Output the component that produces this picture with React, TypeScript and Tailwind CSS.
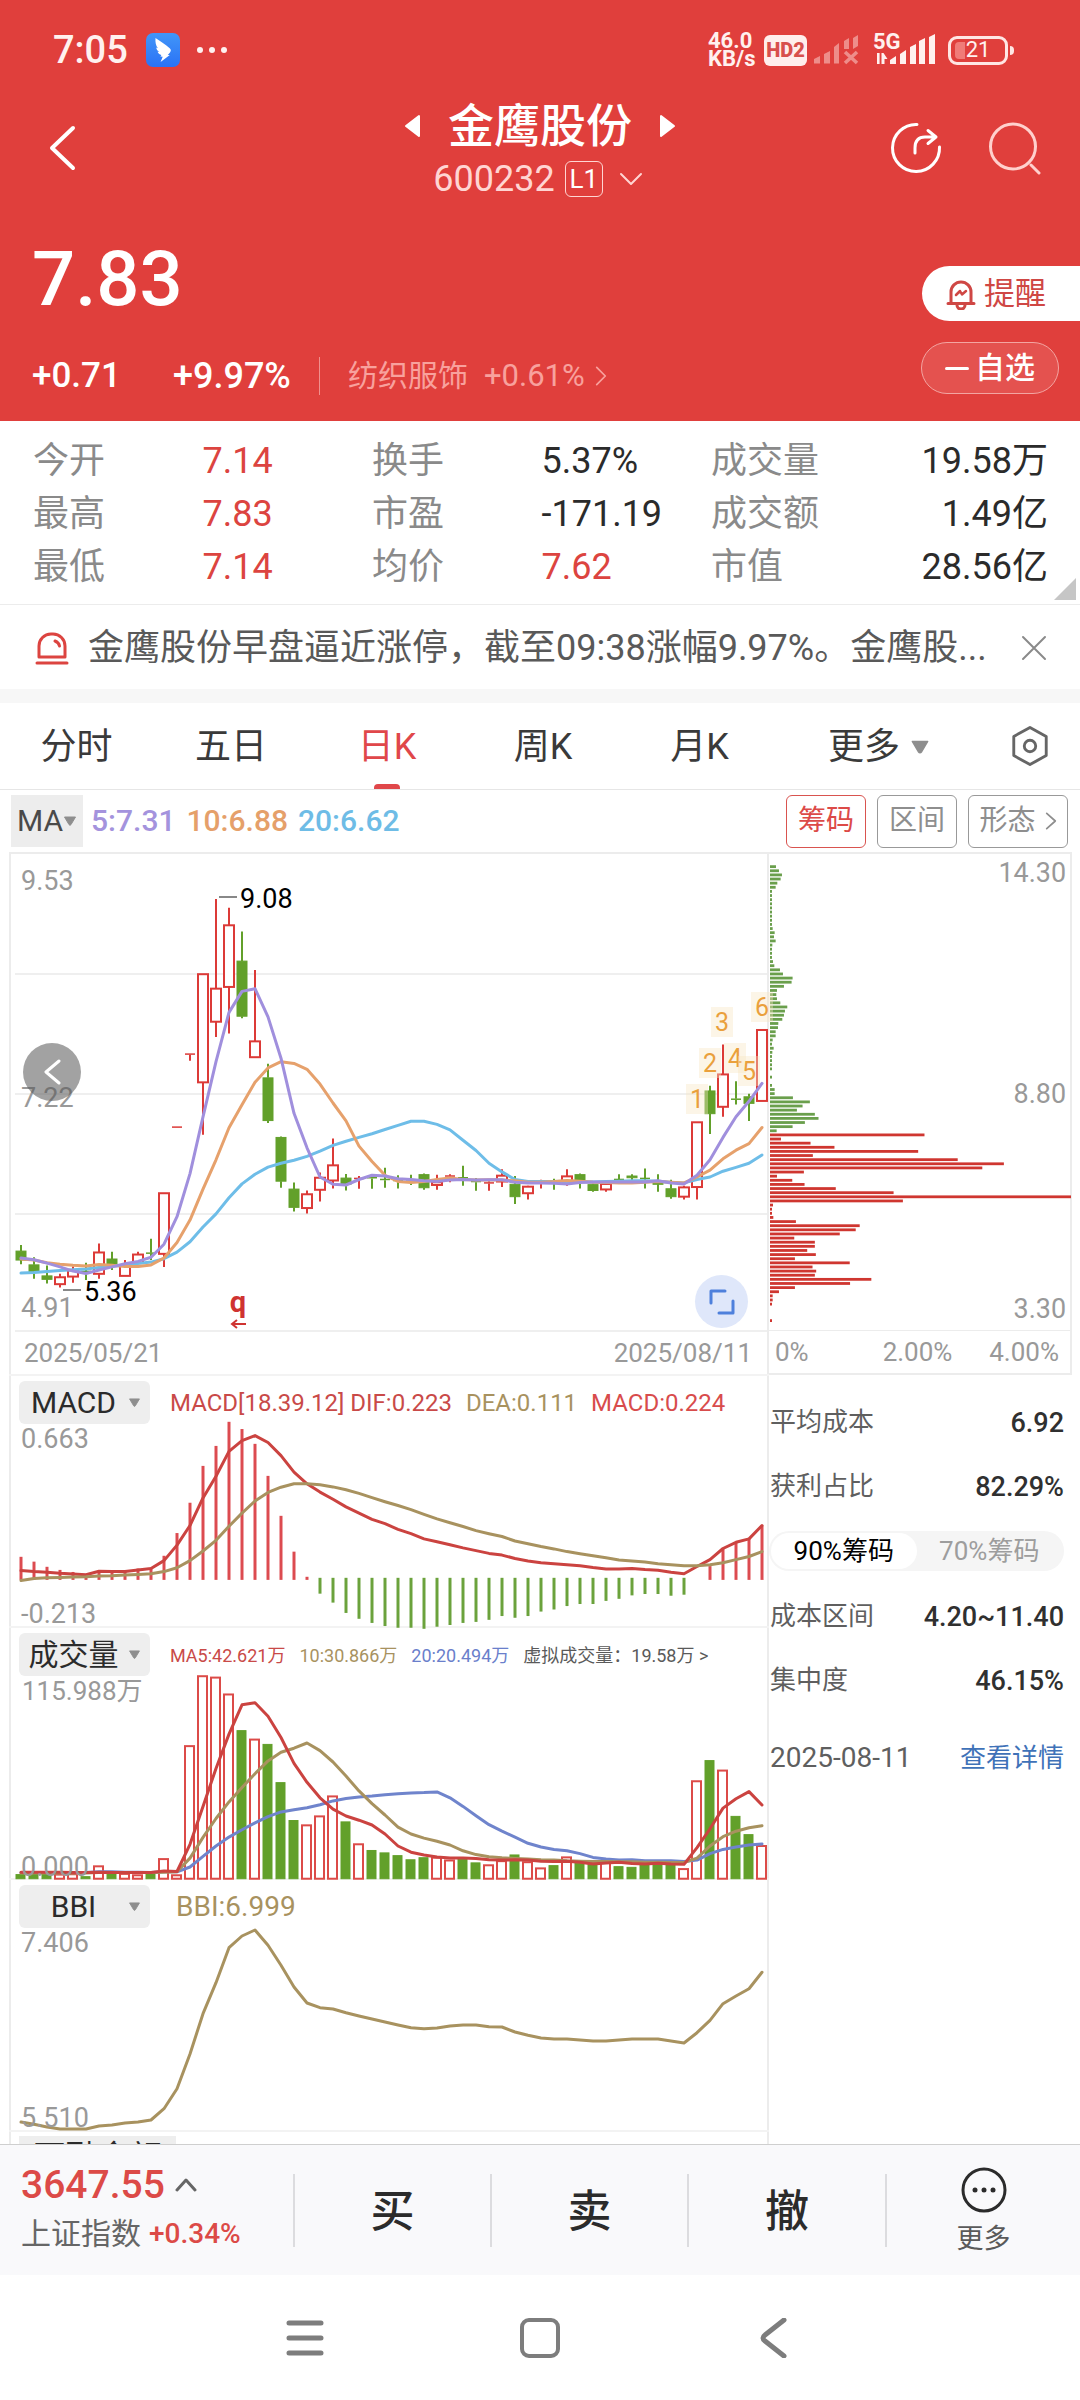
import type { ReactNode } from "react";

type Candle = [up: 0 | 1, high: number, top: number, bottom: number, low: number];

const UP = "#dc3a37";
const DOWN = "#62a02a";
const UNIT = 0.3444;

const xAt = (i: number) => 12 + 13 * i;
const scaleFrom = (origin: number, unit = UNIT) => (v: number) => (v - origin) * unit;
const linePoints = (values: number[], y: (v: number) => number) =>
  values.map((v, i) => `${xAt(i)},${y(v).toFixed(1)}`).join(" ");

const candles: Candle[] = [
  [0, 1172, 1190, 1216, 1228], [0, 1208, 1230, 1250, 1270], [0, 1232, 1262, 1272, 1284], [1, 1256, 1266, 1286, 1296],
  [1, 1235, 1246, 1264, 1282], [0, 1224, 1248, 1251, 1274], [1, 1168, 1194, 1256, 1270], [0, 1192, 1213, 1230, 1245],
  [1, 1216, 1232, 1262, 1262], [1, 1192, 1200, 1224, 1224], [0, 1154, 1195, 1198, 1216], [1, 1022, 1022, 1198, 1236],
  [1, 829, 829, 832, 832], [1, 617, 617, 620, 637], [1, 386, 386, 700, 852], [1, 168, 428, 524, 568],
  [1, 193, 244, 423, 558], [0, 262, 348, 508, 514], [1, 374, 581, 627, 627], [0, 646, 687, 811, 818],
  [0, 857, 860, 987, 1006], [0, 991, 1010, 1063, 1075], [1, 1014, 1025, 1065, 1081], [1, 962, 977, 1012, 1046],
  [1, 863, 941, 985, 1008], [0, 966, 978, 996, 1014], [1, 972, 978, 981, 1009], [0, 972, 976, 979, 1009],
  [0, 948, 981, 984, 1006], [0, 970, 984, 987, 1008], [0, 968, 982, 985, 998], [0, 965, 968, 1006, 1012],
  [1, 968, 990, 998, 1012], [1, 967, 971, 974, 990], [0, 942, 976, 979, 1000], [0, 978, 987, 990, 1015],
  [1, 987, 991, 994, 1015], [1, 952, 971, 988, 1004], [0, 972, 996, 1032, 1053], [1, 1000, 1003, 1022, 1040],
  [1, 983, 992, 995, 1008], [0, 980, 990, 993, 1012], [1, 952, 973, 988, 1000], [0, 965, 968, 984, 1008],
  [0, 994, 997, 1014, 1018], [1, 992, 995, 1011, 1018], [0, 967, 981, 984, 992], [0, 967, 972, 977, 984],
  [0, 950, 978, 981, 1008], [0, 967, 992, 996, 1018], [0, 983, 1009, 1032, 1038], [1, 1000, 1005, 1032, 1040],
  [1, 816, 816, 1004, 1040], [0, 710, 725, 791, 850], [1, 590, 677, 771, 800], [0, 697, 748, 751, 764],
  [0, 733, 742, 761, 812], [1, 548, 548, 754, 754],
];

const ma5 = [1210, 1215, 1225, 1236, 1248, 1255, 1245, 1236, 1227, 1220, 1208, 1170, 1090, 965, 800, 640, 497, 436, 428, 510, 630, 790, 890, 975, 996, 998, 982, 970, 972, 980, 982, 986, 988, 984, 982, 984, 983, 983, 990, 992, 992, 993, 995, 991, 989, 989, 989, 989, 989, 986, 992, 995, 970, 925, 860, 800, 755, 703];
const ma10 = [1213, 1216, 1224, 1228, 1231, 1233, 1229, 1231, 1235, 1235, 1230, 1210, 1165, 1100, 1010, 925, 832, 765, 700, 658, 640, 645, 662, 705, 760, 812, 885, 930, 970, 988, 991, 988, 982, 978, 982, 984, 983, 984, 986, 990, 990, 988, 985, 987, 990, 991, 992, 992, 990, 988, 990, 992, 975, 955, 922, 897, 878, 831];
const ma20 = [1254, 1252, 1249, 1246, 1244, 1242, 1238, 1234, 1230, 1226, 1222, 1212, 1193, 1163, 1120, 1082, 1035, 995, 967, 946, 935, 926, 915, 900, 883, 871, 860, 849, 837, 825, 813, 813, 822, 838, 868, 898, 935, 960, 982, 988, 988, 988, 987, 988, 989, 988, 987, 986, 986, 987, 990, 992, 982, 975, 958, 947, 935, 911];

const chips = [
  18, 27, 36, 32, 22, 17, 6, 6, 6, 6, 6, 6, 6, 6, 6, 8, 14, 12, 17, 7, 6, 6, 6, 9, 13, 30, 39, 68, 65, 42, 21, 19, 21, 31, 52, 45, 42, 37, 25, 24, 17, 17, 8, 6, 11, 7, 6, 6, 6, 6, 0, 6, 0, 6, 14, 14, 69, 120, 98, 81, 135, 146, 105, 68, 20,
  465, 33, 122, 194, 446, 129, 565, 704, 639, 102, 21, 67, 104, 198, 372, 906, 400, 9, 6, 6, 10, 78, 270, 258, 210, 73, 135, 135, 112, 138, 75, 240, 128, 139, 135, 305, 241, 75, 27, 8, 8, 6, 0, 0, 0, 6,
];
const FIRST_PROFIT_CHIP = 65;

const macdBars = [566, 580, 595, 604, 610, 616, 606, 606, 606, 600, 597, 563, 497, 409, 302, 244, 174, 195, 238, 331, 447, 551, 624, 673, 699, 729, 746, 758, 767, 772, 772, 775, 769, 764, 758, 755, 749, 738, 743, 738, 725, 719, 709, 703, 703, 694, 688, 678, 674, 674, 679, 676, 0, 593, 542, 524, 512, 475];
const dif = [606, 609, 611, 614, 616, 618, 608, 609, 609, 604, 600, 577, 532, 475, 395, 332, 260, 229, 214, 234, 272, 320, 354, 378, 399, 421, 439, 457, 470, 486, 499, 514, 522, 531, 540, 548, 556, 561, 571, 578, 583, 586, 589, 592, 597, 601, 601, 600, 603, 605, 611, 615, 594, 574, 542, 524, 514, 475];
const dea = [635, 629, 627, 626, 625, 624, 622, 621, 619, 617, 615, 609, 598, 577, 549, 518, 477, 439, 404, 379, 364, 354, 354, 357, 363, 371, 382, 394, 406, 417, 429, 443, 456, 467, 478, 490, 499, 507, 520, 528, 536, 543, 551, 557, 563, 569, 575, 578, 581, 586, 589, 592, 592, 589, 583, 574, 565, 551];

const volumes = [1488, 1486, 1485, 1488, 1487, 1494, 1464, 1486, 1486, 1490, 1484, 1443, 1490, 1115, 912, 916, 965, 1070, 1096, 1110, 1221, 1331, 1345, 1319, 1261, 1335, 1400, 1418, 1425, 1433, 1445, 1439, 1439, 1447, 1443, 1454, 1461, 1449, 1431, 1452, 1470, 1462, 1438, 1455, 1459, 1454, 1465, 1467, 1458, 1458, 1460, 1472, 1217, 1157, 1186, 1319, 1372, 1405];
const volumeUp = "0001101011011111101000111010000011001101101001000001101001";
const vol5 = [1481, 1481, 1481, 1481, 1482, 1482, 1481, 1482, 1482, 1482, 1482, 1478, 1479, 1400, 1290, 1180, 1080, 995, 989, 1028, 1090, 1165, 1220, 1265, 1298, 1318, 1330, 1344, 1370, 1405, 1423, 1431, 1437, 1440, 1440, 1441, 1445, 1446, 1445, 1446, 1449, 1450, 1449, 1452, 1457, 1454, 1452, 1456, 1457, 1455, 1457, 1458, 1410, 1355, 1295, 1268, 1247, 1286];
const vol10 = [1483, 1483, 1483, 1483, 1483, 1483, 1482, 1482, 1482, 1482, 1482, 1481, 1480, 1440, 1380, 1325, 1277, 1235, 1195, 1158, 1133, 1121, 1106, 1128, 1161, 1202, 1245, 1282, 1315, 1350, 1370, 1382, 1391, 1402, 1419, 1430, 1436, 1439, 1441, 1443, 1445, 1446, 1448, 1449, 1450, 1450, 1451, 1451, 1452, 1452, 1453, 1453, 1440, 1405, 1378, 1362, 1352, 1346];
const vol20 = [1482, 1482, 1482, 1482, 1482, 1482, 1480, 1480, 1481, 1481, 1482, 1480, 1480, 1466, 1435, 1405, 1379, 1358, 1338, 1320, 1306, 1300, 1294, 1285, 1274, 1267, 1263, 1260, 1256, 1253, 1251, 1250, 1248, 1265, 1290, 1317, 1343, 1362, 1379, 1397, 1408, 1415, 1419, 1427, 1438, 1443, 1446, 1445, 1448, 1448, 1448, 1450, 1446, 1427, 1415, 1408, 1402, 1399];

const bbi = [780, 787, 795, 801, 801, 801, 792, 789, 783, 780, 774, 740, 680, 576, 455, 362, 257, 222, 204, 250, 310, 375, 423, 437, 441, 452, 462, 471, 480, 489, 497, 500, 498, 492, 489, 489, 494, 495, 510, 520, 528, 531, 531, 534, 537, 537, 534, 531, 531, 531, 537, 543, 512, 475, 425, 402, 380, 331];

const signals: [string, number, number][] = [
  ["1", 688, 245], ["2", 701, 209], ["3", 713, 168], ["4", 726, 204], ["5", 740, 217], ["6", 753, 153],
];

const quotes: [string, string, string][][] = [
  [["今开", "7.14", "text-[#dc4440]"], ["换手", "5.37%", "text-[#2b2b2b]"], ["成交量", "19.58万", "text-[#2b2b2b]"]],
  [["最高", "7.83", "text-[#dc4440]"], ["市盈", "-171.19", "text-[#2b2b2b]"], ["成交额", "1.49亿", "text-[#2b2b2b]"]],
  [["最低", "7.14", "text-[#dc4440]"], ["均价", "7.62", "text-[#dc4440]"], ["市值", "28.56亿", "text-[#2b2b2b]"]],
];

function Polyline({ values, y, color }: { values: number[]; y: (v: number) => number; color: string }) {
  return <polyline points={linePoints(values, y)} fill="none" stroke={color} strokeWidth="3" strokeLinejoin="round" strokeLinecap="round" />;
}

function Caret({ className }: { className: string }) {
  return (
    <svg viewBox="0 0 14 10" className={className} aria-hidden="true">
      <path d="M1.5 1h11L8 8.6a1.2 1.2 0 0 1-2 0z" fill="#8e8e8e" stroke="#8e8e8e" strokeLinejoin="round" />
    </svg>
  );
}

function Stroke({ d, box, className, width = 3 }: { d: string; box: string; className: string; width?: number }) {
  return (
    <svg viewBox={box} className={className} fill="none" stroke="currentColor" strokeWidth={width} strokeLinecap="round" strokeLinejoin="round" aria-hidden="true">
      <path d={d} />
    </svg>
  );
}

function StatusBar() {
  return (
    <div className="flex h-25 items-center justify-between pl-[53px] pr-[66px] text-[#fff1ef]">
      <div className="flex items-center">
        <span className="w-[93px] text-[38px] font-medium leading-10">7:05</span>
        <svg viewBox="0 0 34 34" className="size-[34px]" aria-hidden="true">
          <defs>
            <linearGradient id="wing" x1="0" y1="0" x2="0" y2="1">
              <stop offset="0" stopColor="#4296f8" />
              <stop offset="1" stopColor="#2a72f6" />
            </linearGradient>
          </defs>
          <rect width="34" height="34" rx="7" fill="url(#wing)" />
          <path d="M9.5 5c5 3.400 10 6.200 14.200 10.300 1.500 1.400 1.400 2.700.3 4.100l-2.200 2.700h2L14.600 29l2.100-5.200-2.300-.2 1-1.500c-2-.7-3.300-1.900-3.800-3.300l1.700.2c-1.900-1.400-2.900-2.800-3.100-4.600l1.700.9C9.900 12.800 9.100 9 9.500 5z" fill="#fff" />
        </svg>
        <svg viewBox="0 0 32 8" className="ml-4 h-2 w-8" fill="currentColor" aria-hidden="true">
          <circle cx="4" cy="4" r="3" /><circle cx="16" cy="4" r="3" /><circle cx="28" cy="4" r="3" />
        </svg>
      </div>
      <div className="flex items-center">
        <div className="w-14 text-[22px] font-bold leading-[18px]">
          <div>46.0</div>
          <div>KB/s</div>
        </div>
        <span className="flex h-[31px] w-[43px] items-center justify-center rounded-md bg-[#ffeeec] text-xl font-black leading-6 text-[#d8504c]">HD2</span>
        <svg viewBox="0 0 46 30" className="ml-1.5 h-[30px] w-[46px]" fill="#ee8d8a" aria-hidden="true">
          <path d="M1 24l6-3v7.500H1zM11 19l6-3v12.500h-6zM21 12l5-4v20.500h-5zM31 6l5-3v11h-5zM40 3l5-3v11l-5 3z" />
          <path d="M32 17l12 11M44 17L32 28" stroke="#ee8d8a" strokeWidth="3.600" />
        </svg>
        <div className="relative ml-[14px] h-8 w-[62px]">
          <span className="absolute left-0 top-[-2px] text-[22px] font-bold leading-5">5G</span>
          <svg viewBox="0 0 62 32" className="size-full" fill="currentColor" aria-hidden="true">
            <path d="M17 26l6-4v8h-6zM27 20l6-4v14h-6zM37 13l6-3v20h-6zM46 7l6-3v26h-6zM56 3l6-3v30h-6z" />
            <path d="M0 24l4 6V19h2.600v11H4zM8.500 19h2l4 6h-3v5h-3z" />
          </svg>
        </div>
        <div className="ml-[13px] flex items-center gap-[2px]">
          <span className="relative flex h-[29px] w-[60px] items-center justify-center rounded-[9px] border-[3px] border-[#ffe6e4] text-[22px] leading-6">
            <i className="absolute left-1 top-[3px] h-[17px] w-[10px] rounded-l-sm bg-[#f07b78]" />
            <span className="relative">21</span>
          </span>
          <i className="h-[9px] w-1 rounded-r bg-[#ffe6e4]" />
        </div>
      </div>
    </div>
  );
}

function Header() {
  return (
    <header className="bg-[#e03f3c] text-white">
      <StatusBar />
      <div className="grid h-[104px] grid-cols-[1fr_auto_1fr] px-[38px]">
        <button type="button" aria-label="返回" className="w-10 pb-2 pl-2.5">
          <Stroke box="0 0 28 46" d="M25 3L4 23l21 20" className="h-[46px] w-7" width={4} />
        </button>
        <div className="flex flex-col items-center">
          <div className="flex items-center gap-7">
            <button type="button" aria-label="上一只">
              <svg viewBox="0 0 16 24" className="h-6 w-4"><path d="M15 2v20L2 12z" fill="#fff" stroke="#fff" strokeWidth="2" strokeLinejoin="round" /></svg>
            </button>
            <h1 className="text-[46px] font-medium leading-[52px]">金鹰股份</h1>
            <button type="button" aria-label="下一只">
              <svg viewBox="0 0 16 24" className="h-6 w-4"><path d="M1 2v20l13-10z" fill="#fff" stroke="#fff" strokeWidth="2" strokeLinejoin="round" /></svg>
            </button>
          </div>
          <div className="flex items-center pr-1 pt-[7px] text-[#ffd5d2]">
            <span className="text-[36px] leading-10">600232</span>
            <span className="ml-2.5 flex h-9 w-[38px] items-center justify-center rounded-md border border-[#ffd5d2] text-[26px] leading-7 text-white">L1</span>
            <Stroke box="0 0 24 14" d="M2 2l10 10L22 2" className="ml-4 h-[14px] w-6" width={2} />
          </div>
        </div>
        <div className="flex items-center justify-end gap-[46px] pb-2">
          <button type="button" aria-label="分享">
            <Stroke box="0 0 52 52" d="M27 2.500A23.500 23.500 0 1 0 49.500 25M25 31v-5c0-7 3-11 10-11h11M38 8.500l8 6.500-8 6.500" className="size-[52px]" width={3} />
          </button>
          <button type="button" aria-label="搜索" className="text-[#ffd0cd]">
            <Stroke box="0 0 54 54" d="M25 3a22.500 22.500 0 1 0 0 45 22.500 22.500 0 1 0 0-45zM43 44l8 8" className="size-[54px]" width={3} />
          </button>
        </div>
      </div>
      <div className="flex justify-between pl-8">
        <div>
          <div className="pt-[33px] text-[76px] font-medium leading-[84px]">7.83</div>
          <div className="flex items-center pb-6 pt-[34px] leading-[42px]">
            <span className="w-[141px] text-[35px] font-medium">+0.71</span>
            <span className="w-[146px] text-[36px] font-medium">+9.97%</span>
            <a href="#sector" className="flex h-[38px] items-center border-l border-[#f0908d] pl-7 text-[30px] text-[#f8a19d]">
              纺织服饰
              <span className="pl-4 text-[31px]">+0.61%</span>
              <Stroke box="0 0 14 24" d="M2 2l10 10L2 22" className="ml-[10px] h-[22px] w-3" width={2} />
            </a>
          </div>
        </div>
        <div className="flex flex-col items-end gap-[21px] pt-[62px]">
          <button type="button" className="flex h-[55px] w-[158px] items-center gap-2 rounded-l-full bg-white pl-6 text-[31px] leading-9 text-[#cf4744]">
            <svg viewBox="0 0 30 32" className="h-8 w-[30px]" fill="none" stroke="currentColor" strokeWidth="3" strokeLinejoin="round" strokeLinecap="round" aria-hidden="true">
              <path d="M5 24V14a10 10 0 0 1 20 0v10M2 25.500h26M11 27a4 4 0 0 0 8 0" />
              <path d="M10 17l4-4 2 3.500 4-3.500" strokeWidth="2.500" />
            </svg>
            提醒
          </button>
          <button type="button" className="mr-[21px] flex h-[52px] w-[138px] items-center justify-center gap-[6px] rounded-full border border-[#f3a5a2] bg-[#e4524f] text-[30px] font-medium leading-9">
            <i className="h-[3px] w-6 rounded bg-white" />自选
          </button>
        </div>
      </div>
    </header>
  );
}

function Quotes() {
  return (
    <section className="relative border-b border-[#ececec] pb-[10px] pl-[33px] pr-8 pt-[14px]">
      {quotes.map((row) => (
        <dl key={row[0][0]} className="grid grid-cols-[339fr_339fr_337fr] text-[36px] leading-[53px] text-[#8a8a8a]">
          {row.map(([label, value, tone], i) => (
            <div key={label} className={i === 2 ? "flex justify-between" : "grid grid-cols-2"}>
              <dt>{label}</dt>
              <dd className={tone}>{value}</dd>
            </div>
          ))}
        </dl>
      ))}
      <svg viewBox="0 0 22 22" className="absolute bottom-1 right-1 size-[22px]" aria-hidden="true"><path d="M22 0v22H0z" fill="#c6c6c6" /></svg>
    </section>
  );
}

function News() {
  return (
    <section className="flex h-[98px] items-center border-b-[14px] border-[#f7f7f7] pl-[35px] pr-8 pt-[2px]">
      <svg viewBox="0 0 34 34" className="size-[34px] shrink-0" fill="none" stroke="#dc4440" strokeWidth="3" strokeLinecap="round" aria-hidden="true">
        <path d="M4 26V15a12 12 0 0 1 12-12h2a12 12 0 0 1 12 12v11zM2 32h30M20 10c2.500 1 4 2.500 4.500 5" strokeLinejoin="round" />
      </svg>
      <a href="#news" className="min-w-0 flex-1 truncate pl-[19px] text-[36px] leading-[50px] text-[#595959]">金鹰股份早盘逼近涨停，截至09:38涨幅9.97%。金鹰股...</a>
      <button type="button" aria-label="关闭" className="shrink-0 text-[#8a8a8a]">
        <Stroke box="0 0 28 28" d="M3 3l22 22M25 3L3 25" className="size-7" width={2} />
      </button>
    </section>
  );
}

function Tabs() {
  const names = ["分时", "五日", "日K", "周K", "月K"];
  return (
    <nav className="grid h-[87px] grid-cols-[153fr_156fr_156fr_156fr_157fr_202fr_100fr] border-b border-[#e6e6e6] text-[36px] leading-[50px] text-[#3a3a3a]">
      {names.map((name) => {
        const active = name === "日K";
        return (
          <button key={name} type="button" className={active ? "relative pt-[2px] text-[#e0474a]" : "pt-[2px]"}>
            {name}
            {active && <i className="absolute bottom-0 left-1/2 h-[5px] w-[26px] -translate-x-1/2 rounded-t bg-[#e0474a]" />}
          </button>
        );
      })}
      <button type="button" className="flex items-center justify-center gap-[10px] pt-[2px]">
        更多<Caret className="h-[14px] w-5" />
      </button>
      <button type="button" aria-label="设置" className="flex items-center justify-center">
        <svg viewBox="0 0 40 44" className="h-[42px] w-10" fill="none" stroke="#666" strokeWidth="3" strokeLinejoin="round" aria-hidden="true">
          <path d="M20 2.500l17 9.500v20l-17 9.500L3 32V12z" /><circle cx="20" cy="22" r="6" />
        </svg>
      </button>
    </nav>
  );
}

function AverageRow() {
  return (
    <div className="flex h-[62px] items-center justify-between pl-[11px] pr-3 text-[30px] leading-9">
      <div className="flex items-center">
        <button type="button" className="mr-2 flex h-[52px] items-center bg-[#ededed] px-[6px] text-[#4a4a4a]">MA<Caret className="h-[10px] w-[14px]" /></button>
        <span className="font-medium text-[#a493dd]">5:7.31</span>
        <span className="pl-[11px] font-medium text-[#e5a06a]">10:6.88</span>
        <span className="pl-[10px] font-medium text-[#6ebce6]">20:6.62</span>
      </div>
      <div className="flex gap-[11px] text-[28px]">
        <button type="button" className="h-[53px] w-20 rounded-md border border-[#d9534f] text-[#dc4a47]">筹码</button>
        <button type="button" className="h-[53px] w-20 rounded-md border border-[#999] text-[#8e8e8e]">区间</button>
        <button type="button" className="flex h-[53px] w-[100px] items-center justify-center gap-[9px] rounded-md border border-[#999] text-[#8e8e8e]">
          形态<Stroke box="0 0 14 22" d="M2 2l10 9-10 9" className="h-5 w-3" width={2} />
        </button>
      </div>
    </div>
  );
}

function PriceChart() {
  const y = scaleFrom(37);
  return (
    <div className="relative">
      <svg viewBox="0 0 760 478" className="block h-auto w-full overflow-visible" role="img" aria-label="日K线">
        {[120, 240, 360, 477].map((g) => <path key={g} d={`M6 ${g}H758`} stroke="#efefef" strokeWidth="2" />)}
        <g fill="#999" fontSize="27">
          <text x="12" y="36">9.53</text>
          <text x="12" y="253">7.22</text>
          <text x="12" y="463">4.91</text>
        </g>
        {candles.map(([up, high, top, bottom, low], i) => {
          const x = xAt(i);
          const color = up ? UP : DOWN;
          const flat = bottom - top < 4;
          return (
            <g key={i} stroke={color} strokeWidth="2">
              {high < top && <path d={`M${x} ${y(high)}V${y(top)}`} />}
              {low > bottom && <path d={`M${x} ${y(bottom)}V${y(low)}`} />}
              {flat
                ? <path d={`M${x - 5} ${y(top + 1)}h10`} strokeWidth="1.500" />
                : <rect x={x - 5} y={y(top)} width="10" height={y(bottom) - y(top)} fill={up ? "#fff" : color} strokeWidth={up ? 2 : 1} />}
            </g>
          );
        })}
        {signals.map(([label, sx, sy]) => (
          <g key={label}>
            <rect x={sx - 11} y={sy - 15} width="22" height="30" fill="#f8e7c4" fillOpacity="0.4" />
            <text x={sx} y={sy + 9} fill="#eaa03c" fontSize="25" textAnchor="middle">{label}</text>
          </g>
        ))}
        <Polyline values={ma20} y={y} color="#6ebde8" />
        <Polyline values={ma10} y={y} color="#e6a16c" />
        <Polyline values={ma5} y={y} color="#a08fdd" />
        <path d="M210 43h18M54 436h18" stroke="#888" strokeWidth="2" />
        <g fill="#000" fontSize="27">
          <text x="231" y="54">9.08</text>
          <text x="75" y="447">5.36</text>
        </g>
        <text x="229" y="458" fill="#cf3331" fontSize="29" fontWeight="700" textAnchor="middle">q</text>
        <path d="M237 470h-14m5-4l-5 4 5 4" fill="none" stroke="#cf3331" strokeWidth="2" />
      </svg>
      <button type="button" aria-label="收起" className="absolute left-[14px] top-[189px] flex size-[58px] items-center justify-center rounded-full bg-[#555]/55 text-white">
        <Stroke box="0 0 18 28" d="M16 3L3 14l13 11" className="h-7 w-[18px]" width={3} />
      </button>
      <button type="button" aria-label="全屏" className="absolute bottom-1 right-[21px] flex size-[53px] items-center justify-center rounded-full bg-[#dfe7fa] text-[#4e80dc]">
        <Stroke box="0 0 28 28" d="M3 15V3h14M25 13v12H11" className="size-7" width={3} />
      </button>
    </div>
  );
}

function IndicatorHead({ name, small, children }: { name: string; small?: boolean; children: ReactNode }) {
  return (
    <div className="flex items-center pl-[10px] pt-[5px]">
      <button type="button" className="flex h-[43px] w-[131px] items-center rounded-md bg-[#eeeeee] pr-[9px] text-[30px] leading-9 text-[#2b2b2b]">
        <span className="flex-1 text-center">{name}</span><Caret className="h-[9px] w-[13px]" />
      </button>
      <div className={small ? "flex gap-[14px] whitespace-nowrap pl-5 pt-[2px] text-[18px] leading-7" : "flex gap-[14px] whitespace-nowrap pl-5 text-2xl leading-7"}>{children}</div>
    </div>
  );
}

function Panel({ head, children, label }: { head: ReactNode; children: ReactNode; label: string }) {
  return (
    <section className="relative border-b-2 border-[#f3f3f3]">
      <div className="absolute inset-x-0 top-0">{head}</div>
      <svg viewBox="0 0 760 250" className="block h-auto w-full overflow-visible" role="img" aria-label={label}>{children}</svg>
    </section>
  );
}

function Indicators() {
  const my = scaleFrom(41);
  const vy = scaleFrom(772);
  const by = scaleFrom(54, 1 / 3);
  return (
    <>
      <Panel label="MACD" head={
        <IndicatorHead name="MACD">
          <span className="text-[#c94a48]">MACD[18.39.12] DIF:0.223</span>
          <span className="text-[#a8925f]">DEA:0.111</span>
          <span className="text-[#d84c4c]">MACD:0.224</span>
        </IndicatorHead>
      }>
        <g fill="#999" fontSize="27"><text x="12" y="72">0.663</text><text x="12" y="247">-0.213</text></g>
        {macdBars.map((v, i) => v > 0 && (
          <path key={i} d={`M${xAt(i)} ${my(v)}V${my(v > 630 ? 627 : 633)}`} stroke={v > 630 ? "#6ba23c" : "#dc4b50"} strokeWidth="3" />
        ))}
        <Polyline values={dif} y={my} color="#cb4340" />
        <Polyline values={dea} y={my} color="#a8925f" />
      </Panel>
      <Panel label="成交量" head={
        <IndicatorHead name="成交量" small>
          <span className="text-[#c94a48]">MA5:42.621万</span>
          <span className="text-[#a8925f]">10:30.866万</span>
          <span className="text-[#6a7fcb]">20:20.494万</span>
          <span className="text-[#5a5a5a]">虚拟成交量：19.58万 &gt;</span>
        </IndicatorHead>
      }>
        <text x="13" y="72" fill="#999" fontSize="26">115.988万</text>
        {volumes.map((v, i) => {
          const up = volumeUp[i] === "1";
          const height = vy(1500) - vy(v);
          return <rect key={i} x={xAt(i) - 5} y={vy(v)} width="9" height={height} fill={up ? "#fff" : DOWN} stroke={up ? "#dc4b48" : DOWN} strokeWidth={up ? 2 : 1} />;
        })}
        <Polyline values={vol20} y={vy} color="#6f84cc" />
        <Polyline values={vol10} y={vy} color="#a8925f" />
        <Polyline values={vol5} y={vy} color="#cb4340" />
        <text x="12" y="248" fill="#999" fontSize="27">0.000</text>
      </Panel>
      <Panel label="BBI" head={
        <IndicatorHead name="BBI">
          <span className="pl-[6px] text-[28px] text-[#a8925f]">BBI:6.999</span>
        </IndicatorHead>
      }>
        <Polyline values={bbi} y={by} color="#a8925f" />
        <g fill="#999" fontSize="27"><text x="12" y="72">7.406</text><text x="12" y="247">5.510</text></g>
      </Panel>
      <div className="flex pl-[10px] pt-1">
        <button type="button" className="h-[43px] w-[157px] bg-[#eeeeee] text-[32px] leading-[43px] text-[#2b2b2b]">两融余额</button>
        <span className="pl-7 text-2xl leading-[42px] text-[#777]">余额： 较前收增</span>
      </div>
    </>
  );
}

function ChipPanel() {
  const y = scaleFrom(189, 0.3827);
  return (
    <aside className="min-w-0">
      <div className="border-y-2 border-r-2 border-[#ececec] text-[27px] text-[#999]">
        <svg viewBox="0 0 302 478" className="block h-auto w-full overflow-visible" role="img" aria-label="筹码分布">
          {chips.map((len, i) => (
            <rect key={i} x="1" y={y(218.500 + i * 10.820)} width={len / 3} height="2.800" fill={i < FIRST_PROFIT_CHIP ? "#6a9f4c" : "#cf3630"} />
          ))}
          <g fill="#999" fontSize="27" textAnchor="end">
            <text x="298" y="28">14.30</text>
            <text x="298" y="250">8.80</text>
            <text x="298" y="466">3.30</text>
          </g>
        </svg>
        <div className="grid grid-cols-[108fr_107fr_77fr] whitespace-nowrap border-t border-[#ececec] pl-[6px] pr-1 text-[26px] leading-[42px]">
          <span>0%</span><span>2.00%</span><span>4.00%</span>
        </div>
      </div>
      <dl className="pl-px pr-2 text-[26px] text-[#5f5f5f]">
        <ChipStat name="平均成本" value="6.92" className="pt-[15px]" />
        <ChipStat name="获利占比" value="82.29%" />
      </dl>
      <div className="my-[13px] mr-2 flex h-10 rounded-full bg-[#f5f5f5] p-[2px] text-[26px] leading-9 text-[#9d9d9d]">
        <button type="button" className="flex-1 rounded-full bg-white text-black">90%筹码</button>
        <button type="button" className="flex-1">70%筹码</button>
      </div>
      <dl className="pl-px pr-2 text-[26px] text-[#5f5f5f]">
        <ChipStat name="成本区间" value="4.20~11.40" />
        <ChipStat name="集中度" value="46.15%" />
      </dl>
      <div className="flex items-center justify-between whitespace-nowrap pl-px pr-2 pt-[21px] text-[26px] leading-[50px] text-[#5f5f5f]">
        <span className="text-[28px]">2025-08-11</span>
        <a href="#detail" className="text-[#3f72b8]">查看详情</a>
      </div>
    </aside>
  );
}

function ChipStat({ name, value, className = "" }: { name: string; value: string; className?: string }) {
  return (
    <div className={className}>
      <div className="flex h-16 items-center justify-between whitespace-nowrap leading-9">
        <dt>{name}</dt>
        <dd className="pt-[2px] text-[27px] font-medium text-[#303030]">{value}</dd>
      </div>
    </div>
  );
}

function TradeBar() {
  return (
    <footer className="shrink-0">
      <div className="grid h-[131px] grid-cols-[293fr_197fr_197fr_198fr_195fr] items-center border-t border-[#cfcfcf] bg-[#f9f9fb] text-[#2b2b2b]">
        <a href="#index" className="whitespace-nowrap pl-[21px] text-[#dc4a47]">
          <span className="flex items-center gap-[10px] text-[39px] font-medium leading-[46px]">
            3647.55
            <Stroke box="0 0 22 14" d="M2 12L11 2l9 10" className="h-[14px] w-[22px] text-[#666]" width={3} />
          </span>
          <span className="flex items-center gap-2 pt-[2px] text-[30px] leading-[48px] text-[#666]">
            上证指数<span className="text-[28px] font-medium text-[#dc4a47]">+0.34%</span>
          </span>
        </a>
        {["买", "卖", "撤"].map((name) => (
          <button key={name} type="button" className="h-[73px] border-l-2 border-[#dcdcdf] pt-1 text-[44px] font-medium leading-[60px]">{name}</button>
        ))}
        <button type="button" className="flex h-[73px] flex-col items-center justify-center gap-2 border-l-2 border-[#dcdcdf] pt-1 text-[27px] leading-9 text-[#5a5a5a]">
          <svg viewBox="0 0 46 46" className="size-[46px] shrink-0" aria-hidden="true">
            <circle cx="23" cy="23" r="21" fill="none" stroke="#2b2b2b" strokeWidth="3" />
            <g fill="#2b2b2b"><circle cx="14" cy="23" r="2.500" /><circle cx="23" cy="23" r="2.500" /><circle cx="32" cy="23" r="2.500" /></g>
          </svg>
          更多
        </button>
      </div>
      <div className="flex h-[125px] items-center justify-between bg-white px-[285px] text-[#7d7d7d]">
        <button type="button" aria-label="最近任务"><Stroke box="0 0 40 40" d="M4 5h32M4 20h32M4 35h32" className="size-10" width={5} /></button>
        <button type="button" aria-label="主屏幕"><Stroke box="0 0 42 42" d="M10 3h22a7 7 0 0 1 7 7v22a7 7 0 0 1-7 7H10a7 7 0 0 1-7-7V10a7 7 0 0 1 7-7z" className="size-[42px]" width={4} /></button>
        <button type="button" aria-label="返回"><Stroke box="0 0 40 40" d="M29 2L10 17q-4 3 0 6l19 15" className="size-10" width={5} /></button>
      </div>
    </footer>
  );
}

export default function App() {
  return (
    <div className="flex h-screen flex-col overflow-hidden bg-white font-['Roboto','Noto_Sans_CJK_SC',sans-serif]">
      <Header />
      <main className="min-h-0 flex-1 overflow-hidden">
        <Quotes />
        <News />
        <Tabs />
        <AverageRow />
        <div className="ml-[9px] mr-2 grid grid-cols-[760fr_303fr]">
          <div className="min-w-0 border-t-2 border-[#ececec] shadow-[inset_2px_0_#ececec,inset_-2px_0_#ececec]">
            <PriceChart />
            <div className="flex justify-between border-b-2 border-[#f3f3f3] pl-[15px] pr-[17px] text-[26px] leading-[42px] text-[#999]">
              <span>2025/05/21</span><span>2025/08/11</span>
            </div>
            <Indicators />
          </div>
          <ChipPanel />
        </div>
      </main>
      <TradeBar />
    </div>
  );
}
